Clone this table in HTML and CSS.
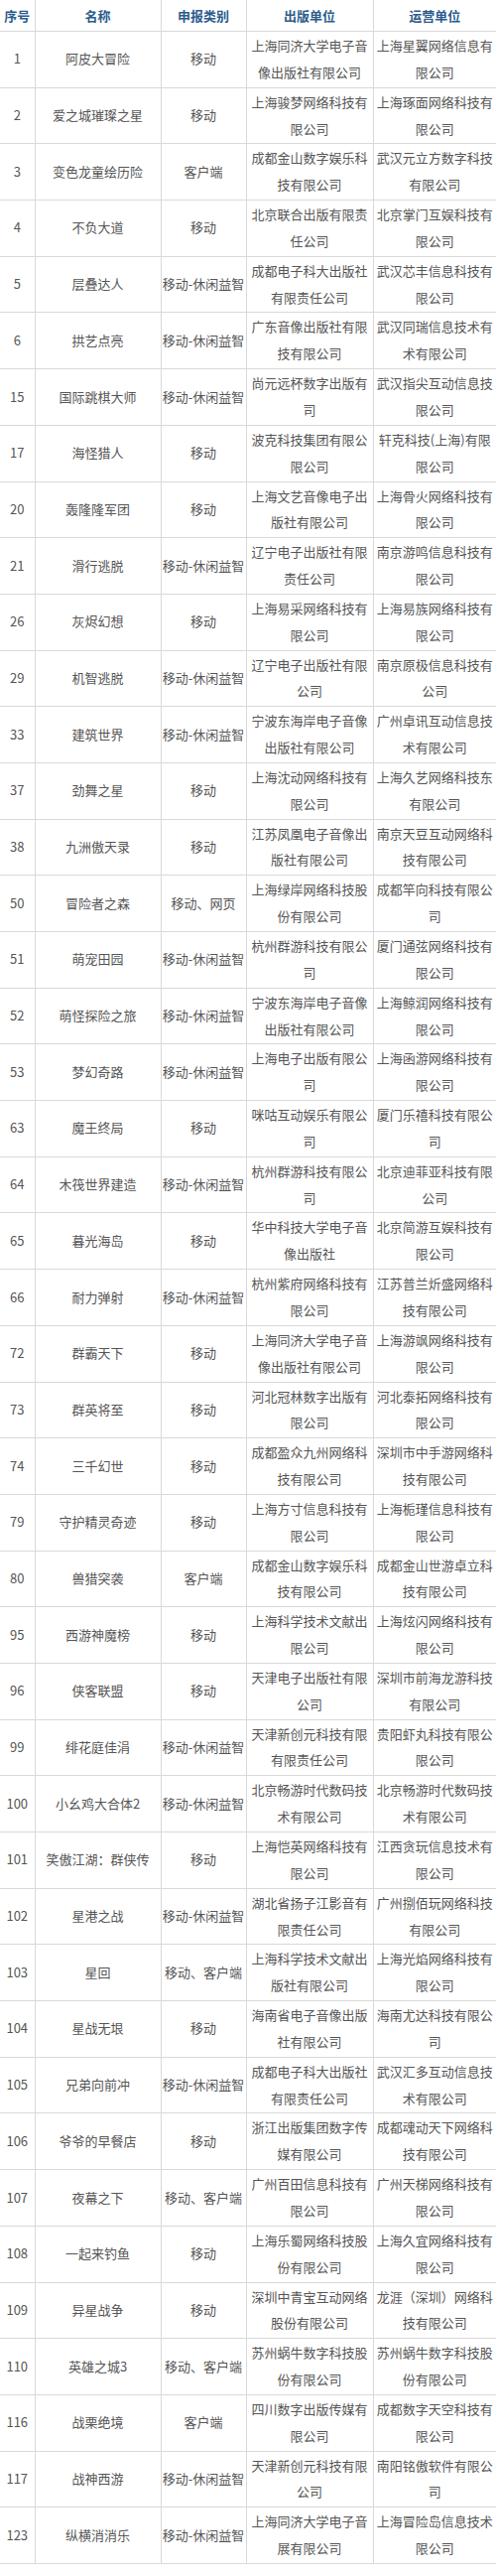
FILE: index.html
```html
<!DOCTYPE html>
<html lang="zh-CN">
<head>
<meta charset="utf-8">
<title>名单</title>
<link rel="stylesheet" href="styles.css">
</head>
<body>
<table class="list">
<colgroup>
<col class="c-no"><col class="c-name"><col class="c-cat"><col class="c-pub"><col class="c-op">
</colgroup>
<thead>
<tr><th>序号</th><th>名称</th><th>申报类别</th><th>出版单位</th><th>运营单位</th></tr>
</thead>
<tbody>
<tr><td>1</td><td>阿皮大冒险</td><td class="cat">移动</td><td>上海同济大学电子音像出版社有限公司</td><td>上海星翼网络信息有限公司</td></tr>
<tr><td>2</td><td>爱之城璀璨之星</td><td class="cat">移动</td><td>上海骏梦网络科技有限公司</td><td>上海琢面网络科技有限公司</td></tr>
<tr><td>3</td><td>变色龙童绘历险</td><td class="cat">客户端</td><td>成都金山数字娱乐科技有限公司</td><td>武汉元立方数字科技有限公司</td></tr>
<tr><td>4</td><td>不负大道</td><td class="cat">移动</td><td>北京联合出版有限责任公司</td><td>北京掌门互娱科技有限公司</td></tr>
<tr><td>5</td><td>层叠达人</td><td class="cat">移动-休闲益智</td><td>成都电子科大出版社有限责任公司</td><td>武汉芯丰信息科技有限公司</td></tr>
<tr><td>6</td><td>拱艺点亮</td><td class="cat">移动-休闲益智</td><td>广东音像出版社有限技有限公司</td><td>武汉同瑞信息技术有术有限公司</td></tr>
<tr><td>15</td><td>国际跳棋大师</td><td class="cat">移动-休闲益智</td><td>尚元远杯数字出版有司</td><td>武汉指尖互动信息技限公司</td></tr>
<tr><td>17</td><td>海怪猎人</td><td class="cat">移动</td><td>波克科技集团有限公限公司</td><td>轩克科技(上海)有限限公司</td></tr>
<tr><td>20</td><td>轰隆隆军团</td><td class="cat">移动</td><td>上海文艺音像电子出版社有限公司</td><td>上海骨火网络科技有限公司</td></tr>
<tr><td>21</td><td>滑行逃脱</td><td class="cat">移动-休闲益智</td><td>辽宁电子出版社有限责任公司</td><td>南京游鸣信息科技有限公司</td></tr>
<tr><td>26</td><td>灰烬幻想</td><td class="cat">移动</td><td>上海易采网络科技有限公司</td><td>上海易族网络科技有限公司</td></tr>
<tr><td>29</td><td>机智逃脱</td><td class="cat">移动-休闲益智</td><td>辽宁电子出版社有限公司</td><td>南京原极信息科技有公司</td></tr>
<tr><td>33</td><td>建筑世界</td><td class="cat">移动-休闲益智</td><td>宁波东海岸电子音像出版社有限公司</td><td>广州卓讯互动信息技术有限公司</td></tr>
<tr><td>37</td><td>劲舞之星</td><td class="cat">移动</td><td>上海沈动网络科技有限公司</td><td>上海久艺网络科技东有限公司</td></tr>
<tr><td>38</td><td>九洲傲天录</td><td class="cat">移动</td><td>江苏凤凰电子音像出版社有限公司</td><td>南京天豆互动网络科技有限公司</td></tr>
<tr><td>50</td><td>冒险者之森</td><td class="cat">移动、网页</td><td>上海绿岸网络科技股份有限公司</td><td>成都竿向科技有限公司</td></tr>
<tr><td>51</td><td>萌宠田园</td><td class="cat">移动-休闲益智</td><td>杭州群游科技有限公司</td><td>厦门通弦网络科技有限公司</td></tr>
<tr><td>52</td><td>萌怪探险之旅</td><td class="cat">移动-休闲益智</td><td>宁波东海岸电子音像出版社有限公司</td><td>上海鲸润网络科技有限公司</td></tr>
<tr><td>53</td><td>梦幻奇路</td><td class="cat">移动-休闲益智</td><td>上海电子出版有限公司</td><td>上海函游网络科技有限公司</td></tr>
<tr><td>63</td><td>魔王终局</td><td class="cat">移动</td><td>咪咕互动娱乐有限公司</td><td>厦门乐禧科技有限公司</td></tr>
<tr><td>64</td><td>木筏世界建造</td><td class="cat">移动-休闲益智</td><td>杭州群游科技有限公司</td><td>北京迪菲亚科技有限公司</td></tr>
<tr><td>65</td><td>暮光海岛</td><td class="cat">移动</td><td>华中科技大学电子音像出版社</td><td>北京简游互娱科技有限公司</td></tr>
<tr><td>66</td><td>耐力弹射</td><td class="cat">移动-休闲益智</td><td>杭州紫府网络科技有限公司</td><td>江苏普兰炘盛网络科技有限公司</td></tr>
<tr><td>72</td><td>群霸天下</td><td class="cat">移动</td><td>上海同济大学电子音像出版社有限公司</td><td>上海游飒网络科技有限公司</td></tr>
<tr><td>73</td><td>群英将至</td><td class="cat">移动</td><td>河北冠林数字出版有限公司</td><td>河北泰拓网络科技有限公司</td></tr>
<tr><td>74</td><td>三千幻世</td><td class="cat">移动</td><td>成都盈众九州网络科技有限公司</td><td>深圳市中手游网络科技有限公司</td></tr>
<tr><td>79</td><td>守护精灵奇迹</td><td class="cat">移动</td><td>上海方寸信息科技有限公司</td><td>上海栀瑾信息科技有限公司</td></tr>
<tr><td>80</td><td>兽猎突袭</td><td class="cat">客户端</td><td>成都金山数字娱乐科技有限公司</td><td>成都金山世游卓立科技有限公司</td></tr>
<tr><td>95</td><td>西游神魔榜</td><td class="cat">移动</td><td>上海科学技术文献出限公司</td><td>上海炫闪网络科技有限公司</td></tr>
<tr><td>96</td><td>侠客联盟</td><td class="cat">移动</td><td>天津电子出版社有限公司</td><td>深圳市前海龙游科技有限公司</td></tr>
<tr><td>99</td><td>绯花庭佳涓</td><td class="cat">移动-休闲益智</td><td>天津新创元科技有限有限责任公司</td><td>贵阳虾丸科技有限公限公司</td></tr>
<tr><td>100</td><td>小幺鸡大合体2</td><td class="cat">移动-休闲益智</td><td>北京畅游时代数码技术有限公司</td><td>北京畅游时代数码技术有限公司</td></tr>
<tr><td>101</td><td>笑傲江湖：群侠传</td><td class="cat">移动</td><td>上海恺英网络科技有限公司</td><td>江西贪玩信息技术有限公司</td></tr>
<tr><td>102</td><td>星港之战</td><td class="cat">移动-休闲益智</td><td>湖北省扬子江影音有限责任公司</td><td>广州捌佰玩网络科技有限公司</td></tr>
<tr><td>103</td><td>星回</td><td class="cat">移动、客户端</td><td>上海科学技术文献出版社有限公司</td><td>上海光焰网络科技有限公司</td></tr>
<tr><td>104</td><td>星战无垠</td><td class="cat">移动</td><td>海南省电子音像出版社有限公司</td><td>海南尤达科技有限公司</td></tr>
<tr><td>105</td><td>兄弟向前冲</td><td class="cat">移动-休闲益智</td><td>成都电子科大出版社有限责任公司</td><td>武汉汇多互动信息技术有限公司</td></tr>
<tr><td>106</td><td>爷爷的早餐店</td><td class="cat">移动</td><td>浙江出版集团数字传媒有限公司</td><td>成都魂动天下网络科技有限公司</td></tr>
<tr><td>107</td><td>夜幕之下</td><td class="cat">移动、客户端</td><td>广州百田信息科技有限公司</td><td>广州天梯网络科技有限公司</td></tr>
<tr><td>108</td><td>一起来钓鱼</td><td class="cat">移动</td><td>上海乐蜀网络科技股份有限公司</td><td>上海久宜网络科技有限公司</td></tr>
<tr><td>109</td><td>异星战争</td><td class="cat">移动</td><td>深圳中青宝互动网络股份有限公司</td><td>龙涯（深圳）网络科技有限公司</td></tr>
<tr><td>110</td><td>英雄之城3</td><td class="cat">移动、客户端</td><td>苏州蜗牛数字科技股份有限公司</td><td>苏州蜗牛数字科技股份有限公司</td></tr>
<tr><td>116</td><td>战栗绝境</td><td class="cat">客户端</td><td>四川数字出版传媒有限公司</td><td>成都数字天空科技有限公司</td></tr>
<tr><td>117</td><td>战神西游</td><td class="cat">移动-休闲益智</td><td>天津新创元科技有限公司</td><td>南阳铭傲软件有限公司</td></tr>
<tr><td>123</td><td>纵横消消乐</td><td class="cat">移动-休闲益智</td><td>上海同济大学电子音展有限公司</td><td>上海冒险岛信息技术限公司</td></tr>
</tbody>
</table>
</body>
</html>
```
FILE: styles.css
```css
html, body {
  margin: 0;
  padding: 0;
  background: #ffffff;
}

.list {
  width: 500px;
  table-layout: fixed;
  border-collapse: collapse;
  font-family: "Noto Sans CJK SC", "Noto Sans", "Liberation Sans", sans-serif;
  font-size: 13px;
  color: #555555;
}

.c-no { width: 35px; }
.c-name { width: 127px; }
.c-cat { width: 86px; }
.c-pub { width: 128px; }
.c-op { width: 124px; }

.list th {
  height: 31px;
  padding: 0;
  line-height: 31px;
  font-weight: bold;
  color: #2b5c8c;
  text-align: center;
  border-bottom: 1px solid #d9d9d9;
  border-right: 1px solid #d9d9d9;
}

.list td {
  padding: 1px 1px;
  line-height: 26.85px;
  text-align: center;
  vertical-align: middle;
  border-bottom: 1px solid #d9d9d9;
  border-right: 1px solid #d9d9d9;
  word-break: break-all;
}

.list th:last-child,
.list td:last-child {
  border-right: none;
}

.list td.cat {
  white-space: nowrap;
  padding: 1px 0;
}
```
